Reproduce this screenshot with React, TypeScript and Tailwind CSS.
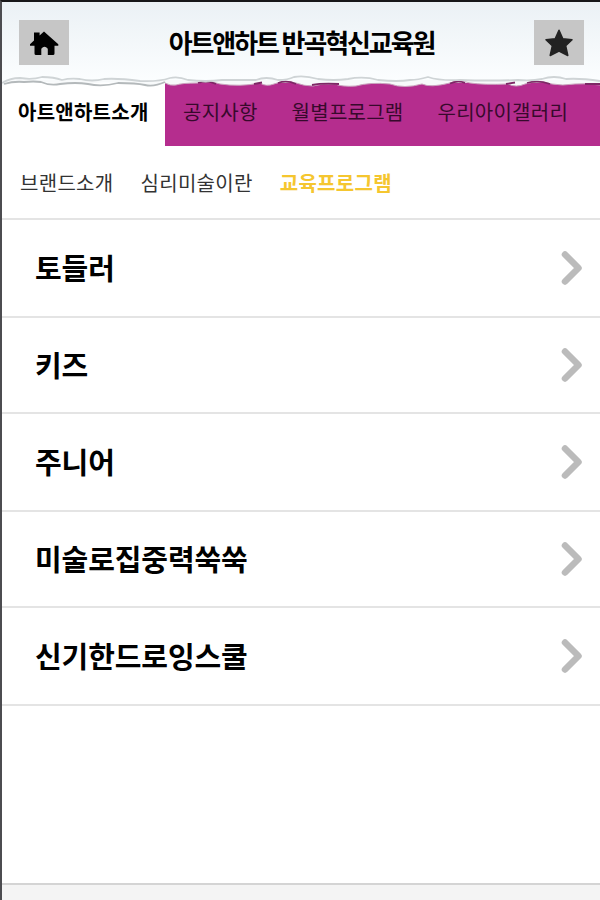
import React from 'react';

const TABS = ['공지사항', '월별프로그램', '우리아이갤러리'];

const ITEMS = [
  { label: '토들러', height: 'h-[98px]' },
  { label: '키즈', height: 'h-[96px]' },
  { label: '주니어', height: 'h-[98px]' },
  { label: '미술로집중력쑥쑥', height: 'h-[96px]' },
  { label: '신기한드로잉스쿨', height: 'h-[98px]' },
];

const HomeIcon: React.FC = () => (
  <svg width="30" height="24" viewBox="0 0 30 24" fill="#000">
    <path d="M15 0.5 L20 5 L29.3 13.3 L29.3 14.8 L25.5 14.8 L25.5 22.5 Q25.5 24 24 24 L18.8 24 L18.8 17.8 Q15.5 13.5 12.3 17.8 L12.3 24 L7 24 Q5.5 24 5.5 22.5 L5.5 14.8 L1 14.8 L1 13.3 L5 9.5 L5 1.5 L10.6 1.5 L10.6 4.4 Z" />
  </svg>
);

const StarIcon: React.FC = () => (
  <svg width="30" height="28" viewBox="0 0 30 28" fill="#222" stroke="#222" strokeWidth="1.5" strokeLinejoin="round">
    <path d="M15 1.2 L18.8 9.8 L28 10.8 L21.7 16.8 L23.8 26.5 L15 22.2 L6.2 26.5 L8.3 16.8 L2 10.8 L11.2 9.8 Z" />
  </svg>
);

// Torn paper strip between the header and the tab bar
const TornEdge: React.FC = () => (
  <svg className="absolute left-0 top-[72px]" width="598" height="18" viewBox="2 74 598 18" fill="none">
    <path d="M2 80 H165 V82 Q155 87 145 84 Q125 83 104 82 Q75 86 57 83 Q40 81 24 81 Q10 82 2 86 Z" fill="#f8fafb" />
    <path d="M165 80 H600 V85 Q588 83 575 84 Q562 86 552 84 Q538 80 525 84 Q516 88 508 84 Q484 85 470 83 Q458 79 450 83 Q430 88 422 84 Q404 89 390 84 Q370 82 356 86 Q342 87 335 84 Q322 83 313 86 Q304 86 296 83 Q284 80 274 84 Q266 87 260 83 Q240 87 220 84 Q208 80 198 83 Q182 83 176 85 Q170 86 165 83 Z" fill="#f7f9fa" />
    <path d="M600 85 Q588 83 575 84 Q562 86 552 84 Q538 80 525 84 Q516 88 508 84 Q484 85 470 83 Q458 79 450 83 Q430 88 422 84 Q404 89 390 84 Q370 82 356 86 Q342 87 335 84 Q322 83 313 86 Q304 86 296 83 Q284 80 274 84 Q266 87 260 83 Q240 87 220 84 Q208 80 198 83 Q182 83 176 85 Q170 86 165 83" stroke="#c9a3bd" strokeWidth="1" />
    <path d="M198 83 Q207 80 216 84 M254 84 L262 82.5 M278 83 Q287 80 296 84 M312 85 Q322 83 339 84 M450 83.5 Q458 80 465 83 M506 84 L515 82.5 M527 83 Q538 80 550 84 M585 84 H600" stroke="#7e2866" strokeWidth="1.8" />
    <path d="M2 83 Q10 78 20 78 Q32 80 42 77 Q54 77 62 80 Q70 78 80 79 Q92 82 104 79 Q118 78 140 81 Q158 82 170 78 Q178 76 188 80 Q206 82 222 80 H256 Q266 76 278 80 Q288 80 294 77 Q304 75 318 79 Q334 81 348 79 Q364 76 378 80 Q398 82 410 80 Q418 80 428 77 Q440 81 460 80 Q490 81 518 80 Q532 81 542 79 Q554 75 566 79 Q580 78 600 81" stroke="#cfd4d6" strokeWidth="1.8" />
    <path d="M4 84 Q14 81 24 82 Q34 81 41 82 Q50 86 60 84 Q76 82 88 84 Q102 87 118 83 Q136 83 145 85 Q154 87 165 82" stroke="#b4b9bb" strokeWidth="1.8" />
  </svg>
);

const Chevron: React.FC = () => (
  <svg width="24" height="38" viewBox="0 0 24 38" fill="none" stroke="#bbb" strokeWidth="6.5" strokeLinecap="round" strokeLinejoin="round">
    <path d="M5 5.5 L18.5 19 L5 32.5" />
  </svg>
);

const App: React.FC = () => {
  return (
    <div className="h-[900px] w-[600px] overflow-hidden border-l-2 border-t-2 border-l-[#4c4c50] border-t-[#171719] bg-white font-['Noto_Sans_CJK_KR',sans-serif] text-black flex flex-col">
      <header className="relative flex h-[81px] shrink-0 items-start justify-between bg-linear-to-b from-[#ebf1f5] to-[#fcfeff] pr-4 pl-[17px] pt-[18px]">
        <button className="flex h-[45px] w-[50px] items-center justify-center bg-[#c6c6c6]">
          <HomeIcon />
        </button>
        <h1 className="mt-[4px] text-[26px] font-bold leading-[36px] tracking-[-2.1px] whitespace-nowrap">
          아트앤하트 반곡혁신교육원
        </h1>
        <button className="flex h-[45px] w-[50px] items-center justify-center bg-[#c6c6c6]">
          <StarIcon />
        </button>
        <TornEdge />
      </header>

      <nav className="flex h-[63px] shrink-0 text-[20px] leading-[30px] tracking-[0.25px] whitespace-nowrap">
        <div className="w-[163px] pl-4 pt-[14px] font-bold">아트앤하트소개</div>
        <div className="flex flex-1 gap-[34px] bg-[#b52d8e] pl-[18px] pt-[14px] text-[#37092c]">
          {TABS.map((tab) => (
            <span key={tab}>{tab}</span>
          ))}
        </div>
      </nav>

      <div className="flex h-[74px] shrink-0 gap-[27px] border-b-2 border-[#e4e4e4] pl-[18px] pt-[22px] text-[20px] leading-[30px] tracking-[0.3px] text-[#333] whitespace-nowrap">
        <span>브랜드소개</span>
        <span>심리미술이란</span>
        <span className="font-bold text-[#f5c62f]">교육프로그램</span>
      </div>

      <ul>
        {ITEMS.map((item) => (
          <li key={item.label} className={`${item.height} flex items-center justify-between border-b-2 border-[#e4e4e4] pl-[33px] pr-4`}>
            <span className="-mt-[2px] text-[29px] font-bold leading-[40px] tracking-[-0.1px]">{item.label}</span>
            <Chevron />
          </li>
        ))}
      </ul>

      <footer className="mt-auto h-[17px] shrink-0 border-t-2 border-[#d4d4d4] bg-[#f4f4f4]" />
    </div>
  );
};

export default App;
